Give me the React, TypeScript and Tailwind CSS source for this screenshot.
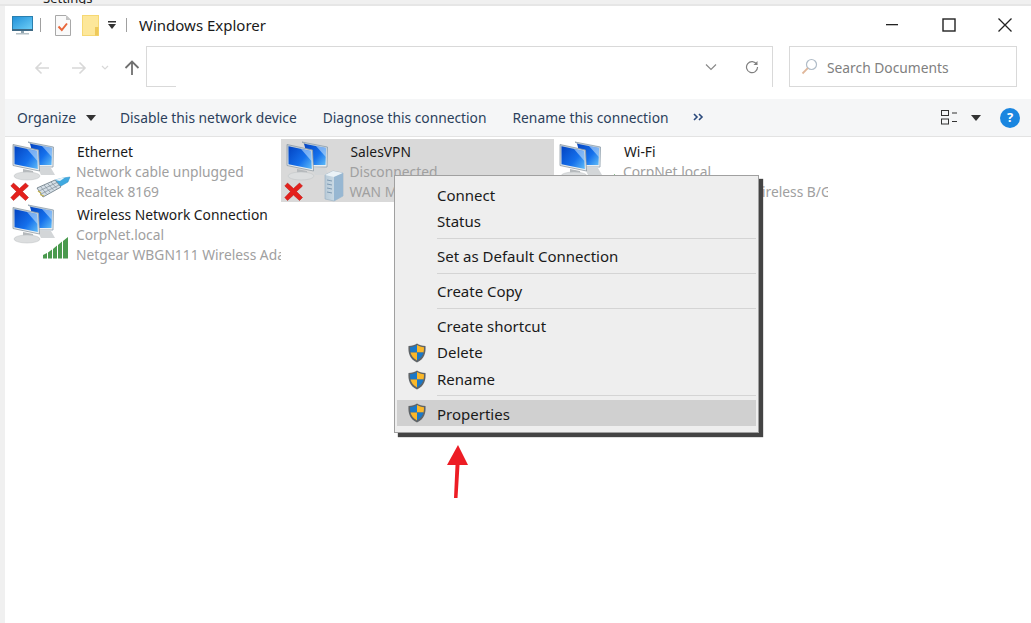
import React from "react";

const font = { fontFamily: '"Noto Sans", "Open Sans", sans-serif' };

function Shield({ className = "" }: { className?: string }) {
  return (
    <svg width="20" height="20" viewBox="0 0 20 20" className={className}>
      <path d="M10 .5C8 2 5 3 1.500 3c-.5 7 1 13 8.500 16.500C17.500 16 19 10 18.500 3 15 3 12 2 10 .5Z" fill="#5f6468" />
      <path d="M10 2C8.200 3.200 5.600 4.200 3 4.300c0 1.800.1 3.500.5 5.200H10Z" fill="#1a78c8" />
      <path d="M10 2c1.800 1.200 4.400 2.200 7 2.300 0 1.800-.1 3.500-.5 5.200H10Z" fill="#fbb829" />
      <path d="M3.500 9.500c.8 3.200 2.800 5.900 6.500 7.900v-7.900Z" fill="#fbb829" />
      <path d="M16.500 9.500c-.8 3.200-2.800 5.900-6.500 7.900v-7.900Z" fill="#1a78c8" />
    </svg>
  );
}

function Computers() {
  return (
    <g>
      <defs>
        <linearGradient id="scr" x1="0" y1="0.1" x2="1" y2="0.9">
          <stop offset="0" stopColor="#0446c4" />
          <stop offset="0.6" stopColor="#1470ec" />
          <stop offset="1" stopColor="#58b4f6" />
        </linearGradient>
        <linearGradient id="frm" x1="0" y1="0" x2="0" y2="1">
          <stop offset="0" stopColor="#b9c9d6" />
          <stop offset="1" stopColor="#eef1f3" />
        </linearGradient>
        <linearGradient id="srv" x1="0" y1="0" x2="1" y2="0">
          <stop offset="0" stopColor="#b9cbd8" />
          <stop offset="1" stopColor="#d9e6ef" />
        </linearGradient>
      </defs>
      {/* rear machine */}
      <path d="M21 3 46.500 8 46 28 28 28 26 6Z" fill="url(#frm)" stroke="#8fa0ac" strokeWidth=".8" />
      <path d="M23 4.800 45 9 44.500 26 29 26Z" fill="url(#scr)" />
      <path d="M35 7.100 45 9 44.800 18Z" fill="#cfe8fb" opacity=".55" />
      <path d="M30 28 44 29 48 36 34 36Z" fill="#d3d6d8" />
      {/* front machine */}
      <path d="M6 5.500 31.500 11 32.500 32 6 26.500Z" fill="url(#frm)" stroke="#8f9ba3" strokeWidth=".8" />
      <path d="M7.500 7.300 30 12 30.800 30 7.500 25.300Z" fill="url(#scr)" />
      <path d="M20 9.900 30 12 30.400 22Z" fill="#cfe8fb" opacity=".55" />
      <path d="M16 30 26 32 26.500 36 16 34Z" fill="#b5b9bc" />
      <ellipse cx="20" cy="37" rx="13" ry="4" fill="#dcdedf" stroke="#bcc0c3" strokeWidth=".5" />
    </g>
  );
}

function RedX() {
  return <path d="M6.500 44 12.500 49.500 18.500 44 21.500 47 15.500 52.500 21.500 58.500 18.500 61.500 12.500 56 6.500 61.500 3.800 58.500 9.500 52.500 3.800 47Z" fill="#e4201c" stroke="#b5120f" strokeWidth=".5" />;
}

function Plug() {
  return (
    <g>
      <path d="M48 41 56 39 63 38 61 43 54 47 51 47Z" fill="#3fa9e0" stroke="#2f8fc4" strokeWidth=".5" />
      <path d="M30 49 48 41 54 48 36 58Z" fill="#d5dfe6" stroke="#74828c" strokeWidth=".9" />
      <path d="M33.500 47.500 39.500 55M37 46 43 53M40.500 44.500 46.500 51M44 43 50 49.500M32 52 50 43.500M34 55 52 46" stroke="#7f8d98" strokeWidth=".7" fill="none" />
      <path d="M33 55.500 37 57M31 52 34 54" stroke="#c9b44a" strokeWidth="1.200" />
      <path d="M48 41 54 39 58 38.500 53 42Z" fill="#e6f2f8" />
    </g>
  );
}

function Server() {
  return (
    <g>
      <path d="M44 36 52 32 62 34 62 57 53 62 44 60Z" fill="url(#srv)" stroke="#8ba6bd" strokeWidth=".5" />
      <path d="M44 36 52 32 62 34 53 38Z" fill="#eaf2f7" />
      <path d="M53 38 62 34 62 57 53 62Z" fill="#97b7d2" />
      <path d="M46 41 51 42M46 45 51 46M46 49 51 50M46 53 51 54" stroke="#7f9bb3" strokeWidth="1" />
    </g>
  );
}

function Bars() {
  return (
    <g fill="#4a9a4e">
      <path d="M36 53 40 51V56.500H36Z" />
      <path d="M41 50.500 45 47.500V56.500H41Z" />
      <path d="M46 47 50 43.500V56.500H46Z" />
      <path d="M51 43 55 39.500V56.500H51Z" />
      <path d="M56 39 61 35V56.500H56Z" />
    </g>
  );
}

function NetIcon({ kind }: { kind: "eth" | "vpn" | "wifi" }) {
  return (
    <svg width="64" height="63" viewBox="0 0 64 63" className="shrink-0">
      <Computers />
      {kind !== "wifi" && <RedX />}
      {kind === "eth" && <Plug />}
      {kind === "vpn" && <Server />}
      {kind === "wifi" && <Bars />}
    </svg>
  );
}

function Conn({
  kind,
  name,
  l1,
  l2,
  selected,
}: {
  kind: "eth" | "vpn" | "wifi";
  name: string;
  l1: string;
  l2: string;
  selected?: boolean;
}) {
  return (
    <div className={"flex h-[63px] overflow-hidden " + (selected ? "bg-[#d9d9d9]" : "")}>
      <div className="w-[70px] shrink-0">
        <NetIcon kind={kind} />
      </div>
      <div className="flex flex-col min-w-0 whitespace-nowrap text-[13.8px] leading-[20px] pt-[3px] text-[#a0a0a0]">
        <span className="text-[#1a1a1a]">{name}</span>
        <span className="-ml-px">{l1}</span>
        <span className="-ml-px">{l2}</span>
      </div>
    </div>
  );
}

function MenuItem({ label, shield, active, gap }: { label: string; shield?: boolean; active?: boolean; gap?: boolean }) {
  return (
    <div className={"flex items-center h-[26px] " + (active ? "bg-[#d0d0d0]" : "") + (gap ? " mt-px" : "")}>
      <div className="w-[40px] shrink-0 flex justify-center">{shield && <Shield />}</div>
      <span className={active ? "mt-[2px]" : "-mt-[2px]"}>{label}</span>
    </div>
  );
}

function Sep({ last }: { last?: boolean }) {
  return <div className={"h-px bg-[#d4d4d4] ml-[40px] " + (last ? "mt-[2px] mb-[4px]" : "mt-[3px] mb-[5px]")} />;
}

export default function App() {
  return (
    <div className="relative w-[1031px] h-[623px] overflow-hidden bg-[#f0f0f0] flex flex-col text-[#1a1a1a]" style={font}>
      {/* behind-window strip */}
      <div className="h-[6px] shrink-0 overflow-hidden pl-[43px] border-b-2 border-[#e6e6e6] text-[13px] leading-[14px] text-[#222]">
        <div className="-mt-[9px]">Settings</div>
      </div>

      <div className="flex-1 ml-[5px] bg-white flex flex-col">
        {/* title bar */}
        <div className="h-[38px] shrink-0 flex items-center pl-[7px] mb-[2px]">
          <svg width="21" height="21" viewBox="0 0 21 21">
            <defs>
              <linearGradient id="pc" x1="0" y1="0" x2="1" y2="1">
                <stop offset="0" stopColor="#1f8fd8" />
                <stop offset="1" stopColor="#6fd0f8" />
              </linearGradient>
            </defs>
            <rect x=".5" y="1.500" width="20" height="13" fill="url(#pc)" stroke="#2a80b0" />
            <rect x="0" y="14" width="21" height="2" fill="#3f6a85" />
            <rect x="9" y="16" width="3" height="2" fill="#8fa3ae" />
            <rect x="4" y="18" width="13" height="1.500" fill="#b4c0c6" />
          </svg>
          <div className="w-px h-[14px] bg-[#a0a0a0] ml-[7px]" />
          <svg width="16" height="21" viewBox="0 0 16 21" className="ml-[14px]">
            <path d="M.5 .5H11L15.500 5V20.500H.5Z" fill="#fafafa" stroke="#a8a8a8" />
            <path d="M11 .5V5H15.500Z" fill="#c4c4c4" />
            <path d="M3.500 11.500 6.800 15 12 8.500" fill="none" stroke="#e8663a" strokeWidth="2" />
          </svg>
          <svg width="18" height="21" viewBox="0 0 18 21" className="ml-[11px]">
            <rect x=".5" y=".5" width="16" height="20" fill="#fde79a" stroke="#f6d873" />
            <rect x="13" y="12" width="3.500" height="8.500" fill="#eec95a" />
          </svg>
          <svg width="10" height="10" viewBox="0 0 10 10" className="ml-[7px]">
            <rect x="1" y="1" width="8" height="1.500" fill="#333" />
            <path d="M1 4H9L5 9Z" fill="#333" />
          </svg>
          <div className="w-px h-[14px] bg-[#a0a0a0] ml-[9px]" />
          <span className="ml-[12px] text-[15px]">Windows Explorer</span>
          <div className="ml-auto flex items-center">
            <svg width="14" height="14" viewBox="0 0 14 14" className="mr-[43px]">
              <rect x="1" y="6" width="12" height="1.300" fill="#222" />
            </svg>
            <svg width="14" height="14" viewBox="0 0 14 14" className="mr-[41px]">
              <rect x="1" y="1" width="12" height="12" fill="none" stroke="#222" strokeWidth="1.400" />
            </svg>
            <svg width="16" height="16" viewBox="0 0 16 16" className="mr-[18px]">
              <path d="M1.500 1.500 14.500 14.500M14.500 1.500 1.500 14.500" stroke="#222" strokeWidth="1.300" />
            </svg>
          </div>
        </div>

        {/* address row */}
        <div className="h-[41px] shrink-0 flex items-stretch">
          <div className="w-[141px] shrink-0 flex items-center pl-[29px] pt-[2px]">
            <svg width="16" height="14" viewBox="0 0 16 14">
              <path d="M15 7H2M7.500 1.500 2 7l5.500 5.500" fill="none" stroke="#d8d8d8" strokeWidth="1.600" />
            </svg>
            <svg width="16" height="14" viewBox="0 0 16 14" className="ml-[21px]">
              <path d="M1 7H14M8.500 1.500 14 7l-5.500 5.500" fill="none" stroke="#d8d8d8" strokeWidth="1.600" />
            </svg>
            <svg width="8" height="6" viewBox="0 0 8 6" className="ml-[14px]">
              <path d="M1 1l3 3 3-3" fill="none" stroke="#d8d8d8" strokeWidth="1.200" />
            </svg>
            <svg width="16" height="16" viewBox="0 0 16 16" className="ml-[15px]">
              <path d="M8 15V2M1.500 8 8 1.500 14.500 8" fill="none" stroke="#707070" strokeWidth="1.800" />
            </svg>
          </div>
          <div className="relative w-[627px] shrink-0 border-t border-l border-r border-[#d9d9d9] flex items-center justify-end">
            <div className="absolute left-0 bottom-0 w-[29px] h-px bg-[#d9d9d9]" />
            <svg width="12" height="8" viewBox="0 0 12 8" className="mr-[28px]">
              <path d="M1 1.500 6 6.500 11 1.500" fill="none" stroke="#8a8a8a" strokeWidth="1.200" />
            </svg>
            <svg width="14" height="14" viewBox="0 0 14 14" className="mr-[13px]">
              <path d="M11.800 4.500A5.500 5.500 0 1 0 12.500 7" fill="none" stroke="#808080" strokeWidth="1.200" />
              <path d="M12.500 1V5H8.500Z" fill="#808080" />
            </svg>
          </div>
          <div className="ml-[16px] w-[228px] shrink-0 border border-[#d9d9d9] flex items-center pl-[11px] text-[13.8px] text-[#808080]">
            <svg width="17" height="17" viewBox="0 0 17 17">
              <circle cx="10.500" cy="6.500" r="5" fill="none" stroke="#b0bcc8" strokeWidth="1.200" />
              <path d="M6.800 10.200 1.500 15.500" stroke="#e0b79a" strokeWidth="1.800" />
            </svg>
            <span className="ml-[9px] pt-[4px]">Search Documents</span>
          </div>
        </div>

        <div className="h-[12px] shrink-0" />

        {/* toolbar */}
        <div className="h-[38px] shrink-0 bg-[#f5f6f7] border-b border-[#e3e3e3] flex items-center pl-[12px] text-[13.8px] text-[#2b3f5c]">
          <span className="mt-[2px]">Organize</span>
          <svg width="10" height="6" viewBox="0 0 10 6" className="ml-[10px]">
            <path d="M0 0H10L5 6Z" fill="#333" />
          </svg>
          <span className="ml-[24px] mt-[2px]">Disable this network device</span>
          <span className="ml-[26px] mt-[2px]">Diagnose this connection</span>
          <span className="ml-[26px] mt-[2px]">Rename this connection</span>
          <svg width="11" height="8" viewBox="0 0 11 8" className="ml-[24px] -mt-[2px]">
            <path d="M1 1 4 4 1 7M6 1 9 4 6 7" fill="none" stroke="#2b4a7c" strokeWidth="1.600" />
          </svg>
          <div className="ml-auto flex items-center pr-[11px]">
            <svg width="17" height="15" viewBox="0 0 17 15">
              <rect x=".5" y=".5" width="7" height="5" fill="none" stroke="#333" />
              <rect x=".5" y="9" width="7" height="5" fill="none" stroke="#333" />
              <rect x="11" y="2.500" width="5" height="1" fill="#333" />
              <rect x="11" y="11" width="5" height="1" fill="#333" />
            </svg>
            <svg width="10" height="6" viewBox="0 0 10 6" className="ml-[13px]">
              <path d="M0 0H10L5 6Z" fill="#333" />
            </svg>
            <div className="ml-[19px] w-[20px] h-[20px] rounded-full bg-[#1a86e0] text-white text-[13px] font-bold flex items-center justify-center">?</div>
          </div>
        </div>

        {/* connections */}
        <div className="grid grid-cols-[273.5px_273.5px_273.5px] grid-rows-[63px_63px] pl-[2px] pt-[2px]">
          <Conn kind="eth" name="Ethernet" l1="Network cable unplugged" l2="Realtek 8169" />
          <Conn kind="vpn" name="SalesVPN" l1="Disconnected" l2="WAN Miniport (IKEv2)" selected />
          <Conn kind="wifi" name="Wi-Fi" l1="CorpNet.local" l2="Netgear WBGN111 Wireless B/G USB Adapter" />
          <Conn kind="wifi" name="Wireless Network Connection" l1="CorpNet.local" l2="Netgear WBGN111 Wireless Adapter" />
        </div>
      </div>

      {/* context menu */}
      <div className="absolute left-[394px] top-[175px] w-[365px] bg-[#eeeeee] border border-[#a0a0a0] pt-[7px] pb-[6px] pl-[2px] pr-[2px] text-[15px] text-[#1a1a1a] shadow-[4px_4px_1px_#444]">
        <MenuItem label="Connect" />
        <MenuItem label="Status" />
        <Sep />
        <MenuItem label="Set as Default Connection" />
        <Sep />
        <MenuItem label="Create Copy" />
        <Sep />
        <MenuItem label="Create shortcut" />
        <MenuItem label="Delete" shield />
        <MenuItem label="Rename" shield gap />
        <Sep last />
        <MenuItem label="Properties" shield active />
      </div>

      {/* annotation arrow */}
      <svg width="24" height="56" viewBox="0 0 24 56" className="absolute left-[445px] top-[444px]">
        <path d="M13 1 23 21H14.500L12.500 54H9L10.500 21H2Z" fill="#ed1c24" />
      </svg>
    </div>
  );
}
